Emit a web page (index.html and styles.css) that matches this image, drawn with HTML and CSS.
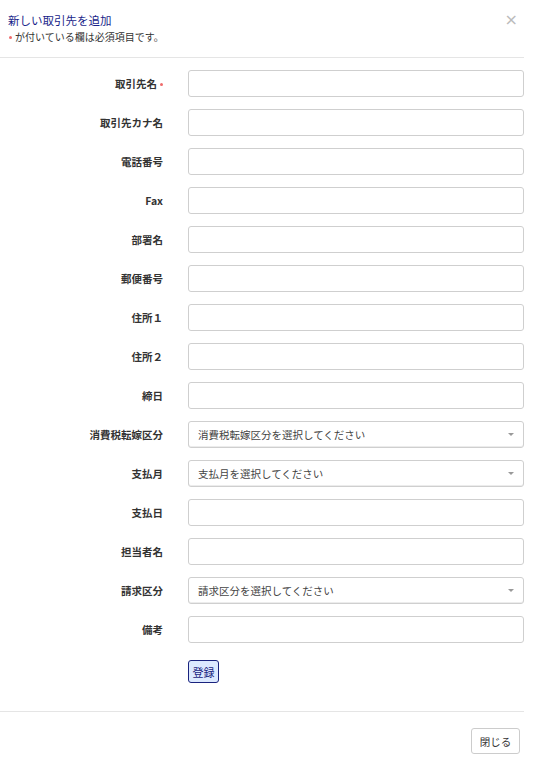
FILE: index.html
```html
<!DOCTYPE html>
<html lang="ja">
<head>
<meta charset="utf-8">
<link rel="stylesheet" href="styles.css">
</head>
<body>
<div class="modal">
  <div class="modal-header">
    <div class="titles">
      <div class="title">新しい取引先を追加</div>
      <div class="subtitle"><span class="dot sub-dot"></span>が付いている欄は必須項目です。</div>
    </div>
    <span class="close">×</span>
  </div>
  <form class="form">
    <label class="lbl">取引先名<span class="dot lbl-dot"></span></label><input class="ctl" type="text">
    <label class="lbl">取引先カナ名</label><input class="ctl" type="text">
    <label class="lbl">電話番号</label><input class="ctl" type="text">
    <label class="lbl">Fax</label><input class="ctl" type="text">
    <label class="lbl">部署名</label><input class="ctl" type="text">
    <label class="lbl">郵便番号</label><input class="ctl" type="text">
    <label class="lbl">住所１</label><input class="ctl" type="text">
    <label class="lbl">住所２</label><input class="ctl" type="text">
    <label class="lbl">締日</label><input class="ctl" type="text">
    <label class="lbl">消費税転嫁区分</label><div class="ctl sel">消費税転嫁区分を選択してください<span class="caret"></span></div>
    <label class="lbl">支払月</label><div class="ctl sel">支払月を選択してください<span class="caret"></span></div>
    <label class="lbl">支払日</label><input class="ctl" type="text">
    <label class="lbl">担当者名</label><input class="ctl" type="text">
    <label class="lbl">請求区分</label><div class="ctl sel">請求区分を選択してください<span class="caret"></span></div>
    <label class="lbl">備考</label><input class="ctl" type="text">
    <span></span><div class="submit-row"><button class="submit" type="button">登録</button></div>
  </form>
  <div class="modal-footer">
    <button class="btn-close" type="button">閉じる</button>
  </div>
</div>
</body>
</html>
```

FILE: styles.css
```css
html, body {
  margin: 0;
  padding: 0;
  background: #fff;
}
body {
  font-family: "Noto Sans CJK JP", "Noto Sans", sans-serif;
  color: #333;
}
.modal {
  width: 524px;
}
.modal-header {
  display: flex;
  justify-content: space-between;
  align-items: flex-start;
  padding: 11px 6px 12px 8px;
  border-bottom: 1px solid #e5e5e5;
}
.title {
  font-size: 11.5px;
  line-height: 18px;
  color: #1a1f8a;
}
.subtitle {
  font-size: 10px;
  line-height: 16px;
  color: #333;
  display: flex;
  align-items: center;
}
.dot {
  display: inline-block;
  width: 3px;
  height: 3px;
  border-radius: 50%;
  background: #ef6b6b;
}
.sub-dot {
  margin: 0 3px 0 1px;
}
.lbl-dot {
  margin-left: 3px;
  vertical-align: middle;
  position: relative;
  top: -1px;
}
.close {
  font-family: "DejaVu Sans", sans-serif;
  font-size: 16px;
  line-height: 16px;
  color: #bbb;
  margin-top: 1px;
}
.form {
  display: grid;
  grid-template-columns: 163px 336px;
  column-gap: 25px;
  row-gap: 12px;
  padding-top: 12px;
  margin: 0;
}
.lbl {
  font-size: 10.5px;
  font-weight: bold;
  color: #333;
  text-align: right;
  align-self: center;
}
.ctl {
  box-sizing: border-box;
  height: 27px;
  width: 336px;
  border: 1px solid #cfcfcf;
  border-radius: 3px;
  margin: 0;
  padding: 0 9px;
  background: #fff;
  font-family: inherit;
  font-size: 10.5px;
}
.sel {
  display: flex;
  align-items: center;
  justify-content: space-between;
  color: #444;
  box-shadow: inset 0 -1px 0 #ececec;
}
.caret {
  width: 0;
  height: 0;
  border-left: 3px solid transparent;
  border-right: 3px solid transparent;
  border-top: 3px solid #999;
}
.submit-row {
  display: flex;
  padding-top: 5px;
  padding-bottom: 28px;
}
.submit {
  box-sizing: border-box;
  height: 23px;
  width: 31px;
  padding: 0;
  border: 1px solid #1a237e;
  border-radius: 3px;
  background: #dce9ff;
  color: #1a237e;
  font-family: inherit;
  font-size: 11px;
}
.modal-footer {
  display: flex;
  justify-content: flex-end;
  border-top: 1px solid #e5e5e5;
  padding: 16px 4px 0 0;
}
.btn-close {
  box-sizing: border-box;
  height: 26px;
  width: 49px;
  padding: 0;
  border: 1px solid #ccc;
  border-radius: 3px;
  background: #fff;
  color: #333;
  font-family: inherit;
  font-size: 10.5px;
}
```
